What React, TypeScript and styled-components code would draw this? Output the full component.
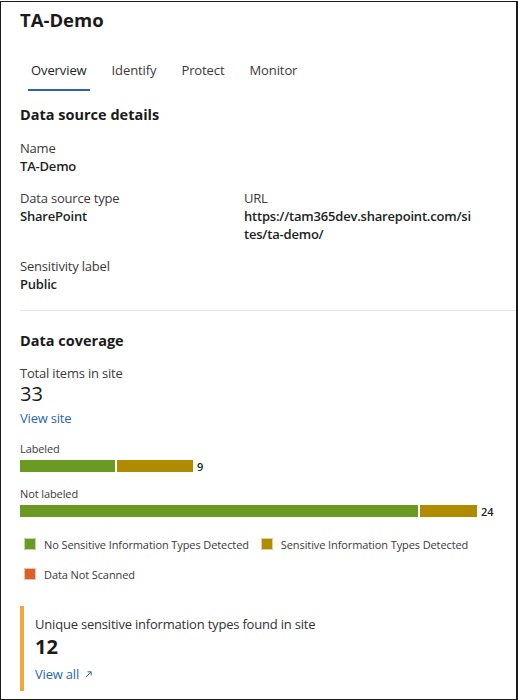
import React, { useState } from "react";
import styled, { createGlobalStyle } from "styled-components";

const GlobalStyle = createGlobalStyle`
    html, body {
        margin: 0;
        padding: 0;
        background: #ffffff;
    }
    body {
        font-family: "Segoe UI", "Open Sans", "Noto Sans", sans-serif;
        color: #323130;
    }
    * {
        box-sizing: border-box;
    }
`;

const Frame = styled.div`
    width: 518px;
    height: 699px;
    margin-top: 1px;
    border: 1px solid #1b1b1b;
    border-right-width: 2px;
    overflow: hidden;
    background: #ffffff;
`;

const Page = styled.div`
    padding: 4px 0 0 19px;
`;

const Title = styled.h1`
    margin: 0;
    font-size: 18.5px;
    line-height: 28px;
    font-weight: 700;
    color: #1b1a19;
`;

const TabRow = styled.div`
    display: flex;
    gap: 19px;
    margin: 15px 0 0 8px;
    height: 42px;
`;

const Tab = styled.button<{ $active: boolean }>`
    position: relative;
    background: none;
    border: none;
    padding: 0 3px 1px;
    font-family: inherit;
    font-size: 13px;
    letter-spacing: -0.1px;
    color: ${({ $active }) => ($active ? "#201f1e" : "#3b3a39")};
    cursor: pointer;

    &::after {
        content: "";
        position: absolute;
        left: 0;
        right: 0;
        bottom: 0;
        height: 2px;
        background: ${({ $active }) => ($active ? "#2a64b0" : "transparent")};
    }
`;

const SectionTitle = styled.h2<{ $top: number }>`
    margin: ${({ $top }) => $top}px 0 0;
    font-size: 14.5px;
    line-height: 22px;
    font-weight: 700;
    color: #1b1a19;
`;

const FieldGrid = styled.div`
    display: grid;
    grid-template-columns: 224px 228px;
    row-gap: 14px;
    margin-top: 13px;
`;

const Field = styled.div<{ $wide?: boolean }>`
    grid-column: ${({ $wide }) => ($wide ? "1 / -1" : "auto")};
`;

const Label = styled.div`
    font-size: 13px;
    line-height: 18px;
    letter-spacing: -0.2px;
    color: #3b3a39;
`;

const Value = styled.div`
    font-size: 13px;
    line-height: 18px;
    letter-spacing: -0.2px;
    font-weight: 600;
    color: #201f1e;
    word-break: break-all;
`;

const Divider = styled.hr`
    border: none;
    border-top: 1px solid #e6e6e6;
    margin: 17px 0 0;
`;

const Stat = styled.div`
    margin-top: 12px;
`;

const BigNumber = styled.div`
    font-size: 20px;
    line-height: 24px;
    font-weight: 400;
    color: #1b1a19;
`;

const BoldNumber = styled(BigNumber)`
    font-weight: 700;
    margin-top: 2px;
    margin-bottom: 3px;
`;

const Link = styled.a`
    display: inline-flex;
    align-items: center;
    gap: 5px;
    font-size: 13px;
    line-height: 18px;
    letter-spacing: -0.2px;
    color: #2b66b0;
    text-decoration: none;
    cursor: pointer;
`;

const BarBlock = styled.div<{ $top: number }>`
    margin-top: ${({ $top }) => $top}px;
`;

const BarLabel = styled.div`
    font-size: 11px;
    line-height: 16px;
    letter-spacing: -0.1px;
    color: #3b3a39;
    margin-bottom: 3px;
`;

const BarTrack = styled.div`
    display: flex;
    align-items: center;
    gap: 2px;
    height: 12px;
`;

const Segment = styled.div<{ $color: string }>`
    height: 12px;
    background: ${({ $color }) => $color};
`;

const BarCount = styled.span`
    margin-left: 2px;
    font-size: 11px;
    font-weight: 600;
    color: #201f1e;
`;

const Legend = styled.div`
    display: flex;
    flex-wrap: wrap;
    column-gap: 12px;
    row-gap: 14px;
    margin: 19px 0 0 4px;
`;

const LegendItem = styled.div`
    display: flex;
    align-items: center;
    gap: 8px;
    height: 16px;
    font-size: 11px;
    letter-spacing: -0.1px;
    color: #3b3a39;
`;

const Swatch = styled.span<{ $color: string }>`
    width: 12px;
    height: 12px;
    background: ${({ $color }) => $color};
    border: 1px solid rgba(255, 255, 255, 0.6);
`;

const Card = styled.div`
    margin-top: 24px;
    border-left: 4px solid #f6a53b;
    padding: 9px 0 7px 11px;
`;

const CardLabel = styled.div`
    font-size: 13px;
    line-height: 18px;
    letter-spacing: -0.2px;
    color: #323130;
`;

const GREEN = "#6a9a22";
const GOLD = "#b08b00";
const ORANGE = "#d8612c";

const bars = [
    { label: "Labeled", green: 95, gold: 76, count: 9, top: 13 },
    { label: "Not labeled", green: 398, gold: 57, count: 24, top: 14 },
];

const legend = [
    { label: "No Sensitive Information Types Detected", color: GREEN },
    { label: "Sensitive Information Types Detected", color: GOLD },
    { label: "Data Not Scanned", color: ORANGE },
];

const tabs = ["Overview", "Identify", "Protect", "Monitor"];

export default function App() {
    const [active, setActive] = useState("Overview");

    return (
        <>
            <GlobalStyle />
            <Frame>
                <Page>
                    <Title>TA-Demo</Title>

                    <TabRow>
                        {tabs.map((t) => (
                            <Tab key={t} $active={t === active} onClick={() => setActive(t)}>
                                {t}
                            </Tab>
                        ))}
                    </TabRow>

                    <SectionTitle $top={13}>Data source details</SectionTitle>

                    <FieldGrid>
                        <Field $wide>
                            <Label>Name</Label>
                            <Value>TA-Demo</Value>
                        </Field>
                        <Field>
                            <Label>Data source type</Label>
                            <Value>SharePoint</Value>
                        </Field>
                        <Field>
                            <Label>URL</Label>
                            <Value>https://tam365dev.sharepoint.com/sites/ta-demo/</Value>
                        </Field>
                        <Field $wide>
                            <Label>Sensitivity label</Label>
                            <Value>Public</Value>
                        </Field>
                    </FieldGrid>

                    <Divider />

                    <SectionTitle $top={19}>Data coverage</SectionTitle>

                    <Stat>
                        <Label>Total items in site</Label>
                        <BigNumber>33</BigNumber>
                        <Link>View site</Link>
                    </Stat>

                    {bars.map((b) => (
                        <BarBlock key={b.label} $top={b.top}>
                            <BarLabel>{b.label}</BarLabel>
                            <BarTrack>
                                <Segment $color={GREEN} style={{ width: b.green }} />
                                <Segment $color={GOLD} style={{ width: b.gold }} />
                                <BarCount>{b.count}</BarCount>
                            </BarTrack>
                        </BarBlock>
                    ))}

                    <Legend>
                        {legend.map((l) => (
                            <LegendItem key={l.label}>
                                <Swatch $color={l.color} />
                                {l.label}
                            </LegendItem>
                        ))}
                    </Legend>

                    <Card>
                        <CardLabel>Unique sensitive information types found in site</CardLabel>
                        <BoldNumber>12</BoldNumber>
                        <Link>
                            View all
                            <svg width="9" height="9" viewBox="0 0 10 10" fill="none">
                                <path d="M2 8 L8 2 M4 2 H8 V6" stroke="#2b66b0" strokeWidth="1.1" />
                            </svg>
                        </Link>
                    </Card>
                </Page>
            </Frame>
        </>
    );
}
